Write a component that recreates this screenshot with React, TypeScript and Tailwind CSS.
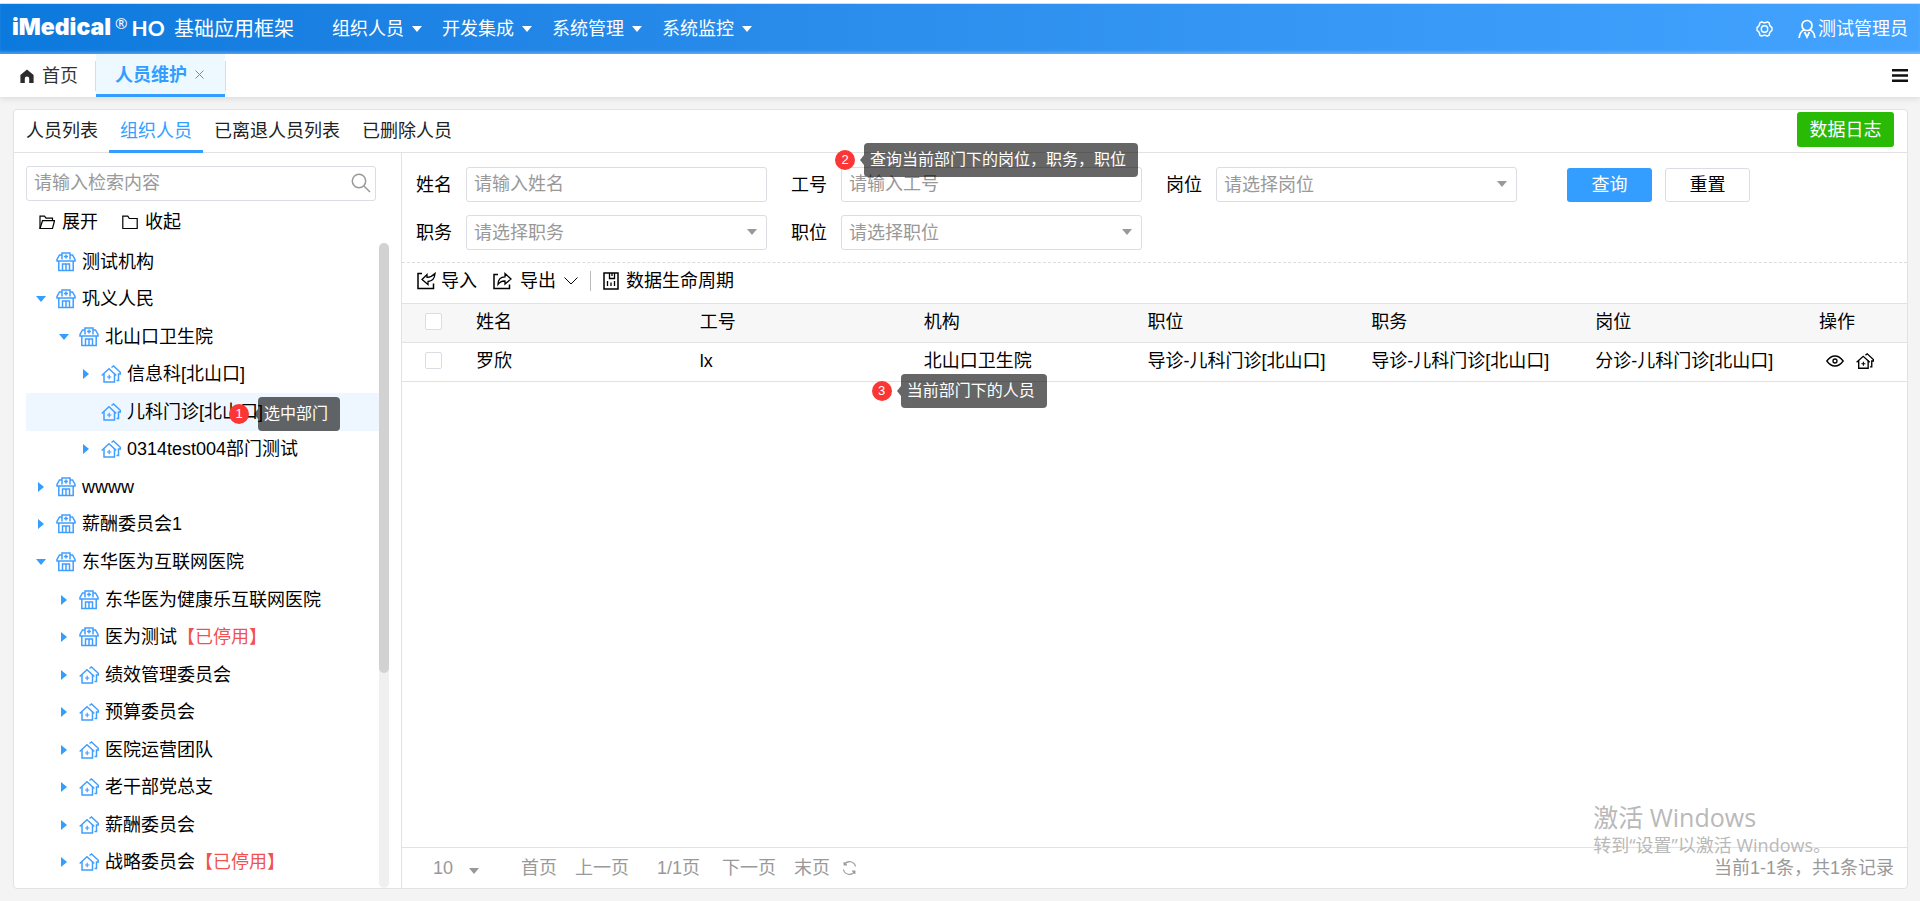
import { ReactNode } from "react";

const menus = ["组织人员", "开发集成", "系统管理", "系统监控"];

const subTabs = ["人员列表", "组织人员", "已离退人员列表", "已删除人员"];

type TreeNode = {
  name: string;
  level: 0 | 1 | 2;
  type: "org" | "dept";
  state: "open" | "closed" | "leaf";
  stopped?: boolean;
  selected?: boolean;
};

const tree: TreeNode[] = [
  { name: "测试机构", level: 0, type: "org", state: "leaf" },
  { name: "巩义人民", level: 0, type: "org", state: "open" },
  { name: "北山口卫生院", level: 1, type: "org", state: "open" },
  { name: "信息科[北山口]", level: 2, type: "dept", state: "closed" },
  { name: "儿科门诊[北山口]", level: 2, type: "dept", state: "leaf", selected: true },
  { name: "0314test004部门测试", level: 2, type: "dept", state: "closed" },
  { name: "wwww", level: 0, type: "org", state: "closed" },
  { name: "薪酬委员会1", level: 0, type: "org", state: "closed" },
  { name: "东华医为互联网医院", level: 0, type: "org", state: "open" },
  { name: "东华医为健康乐互联网医院", level: 1, type: "org", state: "closed" },
  { name: "医为测试", level: 1, type: "org", state: "closed", stopped: true },
  { name: "绩效管理委员会", level: 1, type: "dept", state: "closed" },
  { name: "预算委员会", level: 1, type: "dept", state: "closed" },
  { name: "医院运营团队", level: 1, type: "dept", state: "closed" },
  { name: "老干部党总支", level: 1, type: "dept", state: "closed" },
  { name: "薪酬委员会", level: 1, type: "dept", state: "closed" },
  { name: "战略委员会", level: 1, type: "dept", state: "closed", stopped: true },
];

const indent = ["pl-1", "pl-[27px]", "pl-[49px]"];

const columns = ["姓名", "工号", "机构", "职位", "职务", "岗位"];

const CaretDown = ({ className = "" }: { className?: string }) => (
  <svg width="10" height="6" viewBox="0 0 10 6" fill="currentColor" className={className}>
    <path d="M0 0h10L5 6z" />
  </svg>
);

const CaretRight = () => (
  <svg width="6" height="10" viewBox="0 0 6 10" fill="currentColor">
    <path d="M0 0v10l6-5z" />
  </svg>
);

const OrgIcon = () => (
  <svg width="20" height="20" viewBox="0 0 20 20" fill="none" stroke="currentColor" strokeWidth="1.5">
    <path d="M6 7.5V1h8v6.5" />
    <path d="M6 3H3.5L1 7.5V9h18V7.5L16.5 3H14" />
    <path d="M10 2.5v4M8 4.5h4" />
    <path d="M2.8 9v9.5h14.4V9" />
    <path d="M6.5 18.5V12h7v6.5M10 12v6.5" />
  </svg>
);

const DeptIcon = ({ size = 20 }: { size?: number }) => (
  <svg width={size} height={size} viewBox="0 0 20 20" fill="none" stroke="currentColor" strokeWidth="1.5">
    <path d="M.7 11.5L8 4.8l7.3 6.7" />
    <path d="M3 9.5V18h10.500V9.5" />
    <path d="M10.5 3.5L12.500 2l6.800 6.300V10H17.500v6.500H15.500" />
    <path d="M8.2 10.800v4.400M6 13h4.400" strokeWidth="1.2" />
  </svg>
);

const HomeIcon = () => (
  <svg width="14" height="14" viewBox="0 0 14 14" fill="#2b2b2b">
    <path d="M7 0.5L13.6 6v8H9.2V9.6a2.2 2.2 0 0 0-4.4 0V14H.4V6z" />
  </svg>
);

const GearIcon = () => (
  <svg width="17" height="18" viewBox="0 0 17 18" fill="none" stroke="currentColor" strokeWidth="1.4">
    <path d="M5.6 1.8Q8.5 3.6 11.4 1.8L13.2 2.8Q13.1 6 16 7.6V10.4Q13.1 12 13.2 15.2L11.4 16.2Q8.5 14.4 5.6 16.2L3.8 15.2Q3.9 12 1 10.4V7.6Q3.9 6 3.8 2.8z" />
    <circle cx="8.5" cy="9" r="3.2" />
  </svg>
);

const UserIcon = () => (
  <svg width="18" height="20" viewBox="0 0 18 20" fill="none" stroke="currentColor" strokeWidth="1.7">
    <circle cx="9" cy="6.5" r="5" />
    <path d="M6 10.8Q1.5 13 1.2 19" />
    <path d="M12 10.8Q16.5 13 16.8 19" />
    <path d="M6.5 13L9 18l2.5-5" />
  </svg>
);

const SearchIcon = () => (
  <svg width="20" height="20" viewBox="0 0 20 20" fill="none" stroke="#999" strokeWidth="1.5">
    <circle cx="8" cy="8" r="6.7" />
    <path d="M13 13l6 6" />
  </svg>
);

const FolderOpenIcon = () => (
  <svg width="16" height="15" viewBox="0 0 16 15" fill="none" stroke="currentColor" strokeWidth="1.2">
    <path d="M1 13.5V1.2h4.5l1.5 2h6.5v2.5" />
    <path d="M1 13.5L3.5 5.7h12L13.5 13.5z" />
  </svg>
);

const FolderIcon = () => (
  <svg width="16" height="15" viewBox="0 0 16 15" fill="none" stroke="currentColor" strokeWidth="1.2">
    <path d="M.8 13.5V1.2h5l1.5 2.3h7.9v10z" />
  </svg>
);

const ImportIcon = () => (
  <svg width="19" height="18" viewBox="0 0 19 18" fill="none" stroke="currentColor" strokeWidth="1.5">
    <path d="M5 1.5H1v15h15.5v-5" />
    <path d="M18 1.5Q17.5 9 11 9.5v3L5 7.5l5-5v2.800Q14 5.500 18 1.500z" strokeWidth="1.3" />
  </svg>
);

const ExportIcon = () => (
  <svg width="19" height="18" viewBox="0 0 19 18" fill="none" stroke="currentColor" strokeWidth="1.5">
    <path d="M5 2.5H1v14h15.5v-4" />
    <path d="M5 12.5Q5 5 12 4.8V1.5L18 7l-6 5V9Q7.5 8.8 5 12.5z" strokeWidth="1.3" />
  </svg>
);

const LifeCycleIcon = () => (
  <svg width="16" height="18" viewBox="0 0 16 18" fill="none" stroke="currentColor" strokeWidth="1.5">
    <path d="M1 1h14v16H1z" />
    <path d="M6.5 1v5.500h5V1M9 1v3M4.500 9V14M8 10.500V14M11.500 9V14" strokeWidth="1.3" />
  </svg>
);

const EyeIcon = () => (
  <svg width="18" height="12" viewBox="0 0 18 12" fill="none" stroke="currentColor" strokeWidth="1.3">
    <path d="M.8 6Q4.5 1 9 1t8.2 5Q13.5 11 9 11T.8 6z" />
    <circle cx="9" cy="6" r="2" />
  </svg>
);

const RefreshIcon = () => (
  <svg width="15" height="14" viewBox="0 0 15 14" fill="none" stroke="currentColor" strokeWidth="1.2">
    <path d="M1.5 8.5A6 6 0 0 0 12.5 10.5M12.8 13V10.2H10" />
    <path d="M13.5 5.5A6 6 0 0 0 2.5 3.5M2.2 1v2.8H5" />
  </svg>
);

// numbered red dot with a dark bubble to its right
const Tip = ({ no, text, className }: { no: number; text: string; className: string }) => (
  <div className={`absolute z-10 flex items-center whitespace-nowrap ${className}`}>
    <span className="flex size-5 items-center justify-center rounded-full bg-[#fc3535] text-[13px] text-white">
      {no}
    </span>
    <svg width="4" height="10" viewBox="0 0 4 10" className="ml-[5px]" fill="#000" fillOpacity="0.6">
      <path d="M4 0v10L0 5z" />
    </svg>
    <span className="h-[34px] rounded bg-black/60 pr-3 pl-[6px] text-[16px] leading-[34px] text-white">{text}</span>
  </div>
);

const Field = ({ id, label, select, children }: { id: string; label: string; select?: boolean; children?: ReactNode }) => (
  <div className="relative flex items-center">
    <label htmlFor={id} className="mr-[14px]">
      {label}
    </label>
    {select ? (
      <div className="relative">
        <select
          id={id}
          className="h-[35px] w-[301px] appearance-none rounded-[3px] border border-[#dcdce4] bg-white px-[7px] text-[#999]"
        >
          <option>请选择{label}</option>
        </select>
        <CaretDown className="pointer-events-none absolute top-[14px] right-[10px] text-[#999]" />
      </div>
    ) : (
      <input
        id={id}
        placeholder={`请输入${label}`}
        className="h-[35px] w-[301px] rounded-[3px] border border-[#dcdce4] bg-white px-[7px] placeholder:text-[#999]"
      />
    )}
    {children}
  </div>
);

const Header = () => (
  <header className="border-t border-[#dcdcdc]">
    <div className="flex h-[50px] items-center bg-linear-to-r from-[#0b79dd] via-[#2e90ee] to-[#43a3ff] px-3 text-white shadow-[inset_0_-3px_3px_-1px_rgba(255,255,255,0.3)]">
      <div className="flex w-[150px] items-center pb-1">
        <span className="font-['Inter'] text-[23px] leading-none font-black">iMedical</span>
        <span className="ml-1 self-start font-['Open_Sans'] text-[15px] leading-none">®</span>
        <span className="ml-1 font-['Lato'] text-[21px] leading-none font-bold">HO</span>
      </div>
      <div className="ml-3 text-[20px]">基础应用框架</div>
      <nav className="ml-[38px] flex gap-5">
        {menus.map((m) => (
          <button key={m} className="flex items-center gap-2">
            {m}
            <CaretDown />
          </button>
        ))}
      </nav>
      <button aria-label="设置" className="ml-auto">
        <GearIcon />
      </button>
      <button className="ml-[25px] flex items-center gap-[2px]">
        <UserIcon />
        测试管理员
      </button>
    </div>
  </header>
);

const PageTabs = () => (
  <div className="relative flex h-[43px] items-center bg-white shadow-[0_2px_6px_0_rgba(0,0,0,0.1)]">
    <a href="#home" className="flex h-[30px] w-[96px] items-center gap-2 border-r border-[#dcdcdc] pl-5 text-[#333]">
      <HomeIcon />
      首页
    </a>
    <div className="flex h-full w-[129px] items-center border-b-[3px] border-[#339eff] bg-[#edf8ff] pl-[19px] text-[#339eff]">
      <a href="#person" className="pt-[2px] font-bold">
        人员维护
      </a>
      <button aria-label="关闭" className="ml-2">
        <svg width="9" height="9" viewBox="0 0 9 9" stroke="currentColor">
          <path d="M.5.5l8 8M8.5.5l-8 8" />
        </svg>
      </button>
    </div>
    <div className="h-[30px] w-px bg-[#dcdcdc]" />
    <button aria-label="菜单" className="mr-3 ml-auto">
      <svg width="16" height="13" viewBox="0 0 16 13" fill="#111">
        <path d="M0 0h16v2.5H0zM0 5.2h16v2.5H0zM0 10.5h16V13H0z" />
      </svg>
    </button>
  </div>
);

const OrgTree = () => (
  <aside className="flex w-[388px] shrink-0 flex-col border-r border-[#e2e2e2] pt-[13px] pl-3">
    <div className="relative w-[350px]">
      <input
        aria-label="检索"
        placeholder="请输入检索内容"
        className="block h-[35px] w-full rounded-[3px] border border-[#dcdce4] pr-8 pl-[7px] placeholder:text-[#999]"
      />
      <button aria-label="搜索" className="absolute top-[7px] right-[5px]">
        <SearchIcon />
      </button>
    </div>
    <div className="flex h-[42px] items-center gap-6 pl-[13px]">
      <button className="flex items-center gap-[7px]">
        <FolderOpenIcon />
        展开
      </button>
      <button className="flex items-center gap-[7px]">
        <FolderIcon />
        收起
      </button>
    </div>
    <div className="flex min-h-0 flex-1">
      <ul className="flex flex-1 flex-col pb-[7px]">
        {tree.map((n) => (
          <li
            key={n.name + n.level}
            className={`relative flex flex-1 items-center ${indent[n.level]} ${n.selected ? "bg-[#eef7ff]" : ""}`}
          >
            <span className="mr-1 flex w-[22px] justify-center text-[#339eff]">
              {n.state === "open" && <CaretDown />}
              {n.state === "closed" && <CaretRight />}
            </span>
            <span className="mr-[6px] text-[#409eff]">{n.type === "org" ? <OrgIcon /> : <DeptIcon />}</span>
            <span>{n.name}</span>
            {n.stopped && <span className="text-[#f15151]">【已停用】</span>}
            {n.selected && <Tip no={1} text="选中部门" className="top-1 left-[203px]" />}
          </li>
        ))}
      </ul>
      <div className="mr-3 w-[10px] rounded-[5px] bg-[#f0f0f0]">
        <div className="h-2/3 rounded-[5px] bg-[#d2d2d2]" />
      </div>
    </div>
  </aside>
);

const SearchForm = () => (
  <form className="flex border-b border-dashed border-[#dcdcdc] pt-[14px] pb-3 pl-[14px]">
    <div className="grid grid-cols-[repeat(3,auto)] gap-x-6 gap-y-[13px]">
      <Field id="name" label="姓名" />
      <Field id="code" label="工号">
        <Tip no={2} text="查询当前部门下的岗位，职务，职位" className="-top-6 left-[44px]" />
      </Field>
      <Field id="post" label="岗位" select />
      <Field id="duty" label="职务" select />
      <Field id="position" label="职位" select />
    </div>
    <div className="ml-[50px] flex items-start gap-[13px] pt-px">
      <button type="button" className="h-[34px] w-[85px] rounded-[3px] bg-[#339eff] text-white">
        查询
      </button>
      <button type="button" className="h-[34px] w-[85px] rounded-[3px] border border-[#dcdce4] bg-white">
        重置
      </button>
    </div>
  </form>
);

const Toolbar = () => (
  <div className="flex h-[40px] items-center pb-1 pl-[15px]">
    <button className="flex items-center gap-[5px]">
      <ImportIcon />
      导入
    </button>
    <button className="ml-4 flex items-center gap-2">
      <ExportIcon />
      导出
      <svg width="14" height="8" viewBox="0 0 14 8" fill="none" stroke="currentColor">
        <path d="M.5.5L7 7l6.5-6.5" />
      </svg>
    </button>
    <div className="mx-3 h-5 w-px bg-[#bbb]" />
    <button className="flex items-center gap-[7px]">
      <LifeCycleIcon />
      数据生命周期
    </button>
  </div>
);

const checkbox = "block size-[17px] appearance-none rounded-[2px] border border-[#dcdce4] bg-white";

const PersonTable = () => (
  <table className="w-full table-fixed text-left">
    <thead>
      <tr className="h-[39px] border-y border-[#e2e2e2] bg-[#f7f7f7]">
        <th className="w-[65px] pb-[3px] pl-[23px]">
          <input type="checkbox" aria-label="全选" className={checkbox} />
        </th>
        {columns.map((c) => (
          <th key={c} className="px-[9px] pb-[2px] font-normal">
            {c}
          </th>
        ))}
        <th className="w-[97px] px-[9px] pb-[2px] font-normal">操作</th>
      </tr>
    </thead>
    <tbody>
      <tr className="h-[39px] border-b border-[#e2e2e2]">
        <td className="pb-[3px] pl-[23px]">
          <input type="checkbox" aria-label="选择罗欣" className={checkbox} />
        </td>
        <td className="px-[9px] pb-[2px]">罗欣</td>
        <td className="px-[9px] pb-[2px]">lx</td>
        <td className="relative px-[9px] pb-[2px]">
          北山口卫生院
          <Tip no={3} text="当前部门下的人员" className="top-[31px] -left-[43px]" />
        </td>
        <td className="px-[9px] pb-[2px]">导诊-儿科门诊[北山口]</td>
        <td className="px-[9px] pb-[2px]">导诊-儿科门诊[北山口]</td>
        <td className="px-[9px] pb-[2px]">分诊-儿科门诊[北山口]</td>
        <td className="pb-[2px] pl-4">
          <div className="flex items-center gap-3">
            <button aria-label="查看">
              <EyeIcon />
            </button>
            <button aria-label="部门">
              <DeptIcon size={18} />
            </button>
          </div>
        </td>
      </tr>
    </tbody>
  </table>
);

const Pager = () => (
  <footer className="mt-auto flex h-[41px] items-center border-t border-[#e2e2e2] pr-[13px] pl-[31px] text-[#999]">
    <div className="relative mr-[42px]">
      <select aria-label="每页条数" className="w-[46px] appearance-none">
        <option>10</option>
      </select>
      <CaretDown className="pointer-events-none absolute right-0 bottom-[6px]" />
    </div>
    <button className="mr-[18px]">首页</button>
    <button className="mr-[28px]">上一页</button>
    <span className="mr-[22px]">1/1页</span>
    <button className="mr-[18px]">下一页</button>
    <button className="mr-3">末页</button>
    <button aria-label="刷新">
      <RefreshIcon />
    </button>
    <span className="ml-auto">当前1-1条，共1条记录</span>
  </footer>
);

export default function App() {
  return (
    <div className="relative flex h-screen min-h-[860px] flex-col bg-[#f4f4f4] font-['Liberation_Sans','Noto_Sans_CJK_SC',sans-serif] text-[18px] leading-6 font-normal text-black">
      <div className="bg-white pt-[3px]">
        <Header />
      </div>
      <PageTabs />
      <main className="mt-3 mr-3 mb-3 ml-[13px] flex min-h-0 flex-1 flex-col rounded border border-[#e2e2e2] bg-white">
        <div className="flex h-[43px] border-b border-[#e2e2e2] pl-px">
          {subTabs.map((t) => (
            <button
              key={t}
              className={
                t === "组织人员"
                  ? "h-[43px] border-b-[3px] border-[#339eff] px-[11px] pt-[2px] text-[#339eff]"
                  : "h-[43px] border-b-[3px] border-transparent px-[11px] pt-[2px] text-[#222]"
              }
            >
              {t}
            </button>
          ))}
          <button className="mt-[2px] mr-[13px] ml-auto h-[35px] w-[97px] rounded-[3px] bg-[#28ba05] text-white">
            数据日志
          </button>
        </div>
        <div className="flex min-h-0 flex-1">
          <OrgTree />
          <section className="flex min-w-0 flex-1 flex-col">
            <SearchForm />
            <Toolbar />
            <PersonTable />
            <Pager />
          </section>
        </div>
      </main>
      <div className="pointer-events-none absolute right-[89px] bottom-[44px] font-['Open_Sans','Noto_Sans_CJK_SC',sans-serif] text-[#b9b9b9]">
        <div className="text-[25px] leading-8">激活 Windows</div>
        <div>转到“设置”以激活 Windows。</div>
      </div>
    </div>
  );
}
